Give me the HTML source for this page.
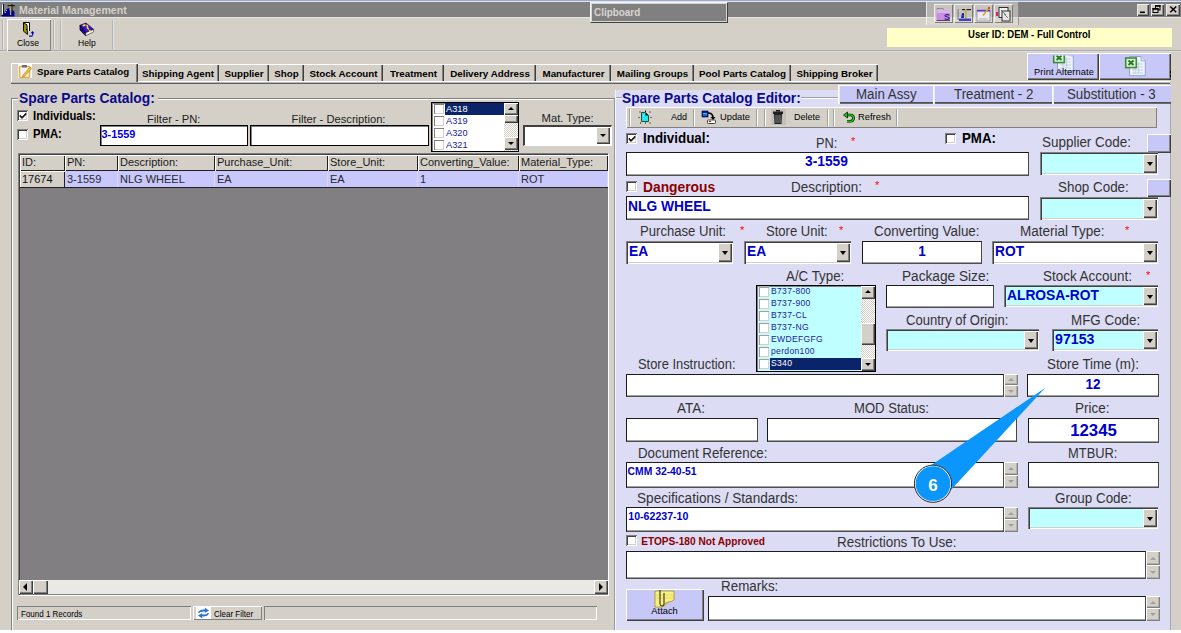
<!DOCTYPE html>
<html><head><meta charset="utf-8"><title>Material Management</title>
<style>
html,body{margin:0;padding:0;}
body{width:1181px;height:633px;position:relative;overflow:hidden;background:#d4d0c8;font-family:"Liberation Sans", sans-serif;}
body>div{position:absolute;}
.t{white-space:nowrap;}
svg{overflow:visible}
</style></head><body>
<div style="left:0px;top:0px;width:1181px;height:1px;background:#9fabc3"></div>
<div style="left:0px;top:1px;width:1181px;height:1px;background:#dae4f2"></div>
<div style="left:0px;top:2px;width:1181px;height:15px;background:#808080"></div>
<div style="left:0px;top:17px;width:1181px;height:1px;background:#e8e6e2"></div>
<svg style="position:absolute;left:0;top:0" width="18" height="18" viewBox="0 0 18 18">
<rect x="2" y="4.5" width="1" height="10" fill="#f0f0f0"/>
<rect x="3" y="4" width="1" height="11" fill="#101010"/>
<path d="M2 16.5 L3.5 14 L5 12 L6 10 L7.5 8.5 L9 8 L9.5 10 L10 11 L12 11 L13 10 L14.5 12 L14.5 16.5Z" fill="#0000a8"/>
<path d="M6 11 L7 10 M5 13 L6 12" stroke="#e0e0ff" stroke-width="0.8"/>
<rect x="1.5" y="15" width="6.5" height="1" fill="#000"/>
<rect x="10" y="6" width="1.5" height="9" fill="#b8b040"/>
<rect x="11.5" y="4" width="1" height="11" fill="#101010"/>
<rect x="7.5" y="5" width="7.5" height="1.2" fill="#181818"/>
</svg>
<div class="t" style="left:19px;top:3.91px;font-size:10.6px;font-weight:bold;color:#d4d0c8;line-height:12.18px;">Material Management</div>
<div style="left:590px;top:2px;width:138px;height:21px;background:#808080;box-sizing:border-box;border:1px solid;border-color:#f4f4f4 #404040 #404040 #f4f4f4;box-shadow:inset 1px 1px 0 #d8d6d2, inset -1px -1px 0 #d8d6d2;"></div>
<div class="t" style="left:594px;top:5.93px;font-size:10.8px;font-weight:bold;color:#d8d4d0;line-height:12.41px;transform:scaleX(0.9167);transform-origin:0 0;">Clipboard</div>
<div style="left:926px;top:2px;width:93px;height:23px;background:rgba(222,220,214,0.55);box-shadow:inset 1px 0 0 rgba(255,255,255,0.7), inset -1px 0 0 rgba(90,90,90,0.5)"></div>
<div style="left:934px;top:4px;width:19px;height:19px;background:rgba(220,216,210,0.5);box-shadow:inset 1px 1px 0 rgba(255,255,255,0.7), inset -1px -1px 0 rgba(70,70,70,0.6)"></div>
<div style="left:954px;top:4px;width:19px;height:19px;background:rgba(220,216,210,0.5);box-shadow:inset 1px 1px 0 rgba(255,255,255,0.7), inset -1px -1px 0 rgba(70,70,70,0.6)"></div>
<div style="left:974px;top:4px;width:19px;height:19px;background:rgba(220,216,210,0.5);box-shadow:inset 1px 1px 0 rgba(255,255,255,0.7), inset -1px -1px 0 rgba(70,70,70,0.6)"></div>
<div style="left:994px;top:4px;width:19px;height:19px;background:rgba(220,216,210,0.5);box-shadow:inset 1px 1px 0 rgba(255,255,255,0.7), inset -1px -1px 0 rgba(70,70,70,0.6)"></div>
<svg style="position:absolute;left:930px;top:2px" width="90" height="23" viewBox="0 0 90 23">
<path d="M7 8.5 L7 6.5 L13 6.5 L14 8.5" fill="none" stroke="#808080" stroke-width="0.8"/>
<rect x="6.5" y="8" width="13.5" height="10.5" fill="#c88ee0"/><rect x="6.5" y="8" width="13.5" height="3" fill="#dcb4ec"/>
<rect x="6.5" y="18" width="13.5" height="1" fill="#604070"/>
<text x="14" y="17.5" font-family="Liberation Sans" font-weight="bold" font-size="9" fill="#20208a">S</text>
<rect x="27.5" y="7" width="1.2" height="11" fill="#808080"/>
<rect x="32" y="7" width="9" height="1.2" fill="#202020"/>
<rect x="35" y="7" width="1.6" height="11" fill="#b8b040"/>
<path d="M31 16 L32 11 L34 11 L34 16Z" fill="#2a2ab0"/>
<rect x="29" y="16.5" width="12" height="2.5" fill="#4040c8"/>
<rect x="47" y="8" width="13" height="11" fill="#ecebf4" stroke="#909090" stroke-width="0.8"/>
<rect x="47" y="8" width="13" height="1.6" fill="#6a30d0"/>
<path d="M49 17 H58" stroke="#a0a0a0" stroke-width="0.8"/>
<path d="M53 13.5 L58.5 6.5" stroke="#c8b020" stroke-width="1.6"/><rect x="58" y="5" width="2" height="2" fill="#e04040"/>
<rect x="69" y="5.5" width="9" height="10" fill="#f4f4f4" stroke="#202020" stroke-width="0.9"/>
<rect x="72" y="9" width="8" height="10" fill="#e8e8e8" stroke="#202020" stroke-width="0.9"/>
<path d="M71 8 L76 13 M74 12 L78 16" stroke="#606060" stroke-width="0.8"/>
<rect x="66" y="10" width="2" height="4" fill="#e0207a"/>
</svg>
<div style="left:1137px;top:4px;width:12px;height:12px;background:#d4d0c8;box-shadow:inset 1px 1px 0 #ecebe8, inset -1px -1px 0 #404040, inset -2px -2px 0 #909090"></div>
<div style="left:1151px;top:4px;width:13px;height:12px;background:#d4d0c8;box-shadow:inset 1px 1px 0 #ecebe8, inset -1px -1px 0 #404040, inset -2px -2px 0 #909090"></div>
<div style="left:1166px;top:4px;width:14px;height:12px;background:#d4d0c8;box-shadow:inset 1px 1px 0 #ecebe8, inset -1px -1px 0 #404040, inset -2px -2px 0 #909090"></div>
<svg style="position:absolute;left:1137px;top:4px" width="44" height="12">
<rect x="3" y="7.5" width="5" height="1.6" fill="#000"/>
<rect x="18.5" y="1.5" width="4.5" height="4.5" fill="none" stroke="#000" stroke-width="1"/><rect x="18" y="1" width="5.5" height="1.8" fill="#000"/>
<rect x="16" y="4.5" width="5" height="4" fill="#d4d0c8" stroke="#000" stroke-width="1"/><rect x="15.5" y="4" width="6" height="1.8" fill="#000"/>
<path d="M33.3 2.5 L39.2 8.3 M39.2 2.5 L33.3 8.3" stroke="#000" stroke-width="1.5"/>
</svg>
<div style="left:0px;top:50px;width:1181px;height:1px;background:#ababab"></div>
<div style="left:0px;top:51px;width:1181px;height:1px;background:#dedcd8"></div>
<div style="left:2px;top:20px;width:1px;height:29px;background:#b4b4b4"></div>
<div style="left:3px;top:20px;width:1px;height:29px;background:#e6e4e0"></div>
<div style="left:53px;top:20px;width:1px;height:29px;background:#b4b4b4"></div>
<div style="left:54px;top:20px;width:1px;height:29px;background:#e6e4e0"></div>
<div style="left:60px;top:20px;width:1px;height:29px;background:#b4b4b4"></div>
<div style="left:61px;top:20px;width:1px;height:29px;background:#e6e4e0"></div>
<div style="left:112px;top:20px;width:1px;height:29px;background:#b4b4b4"></div>
<div style="left:113px;top:20px;width:1px;height:29px;background:#e6e4e0"></div>
<div style="left:7px;top:19px;width:44px;height:32px;background:#d4d0c8;box-shadow:inset 1px 1px 0 #ffffff, inset -1px -1px 0 #808080;"></div>
<svg style="position:absolute;left:20px;top:21px" width="18" height="17" viewBox="0 0 18 17">
<path d="M3.5 9.5 V1.5 H9.5 V10" fill="#fff" stroke="#000" stroke-width="1"/>
<rect x="4" y="2" width="5" height="8" fill="#fff"/>
<path d="M3.5 1.8 L7 3.8 L7.5 13.5 L3.5 10.2Z" fill="#9a9400" stroke="#000" stroke-width="0.9"/>
<rect x="6" y="8" width="1" height="1" fill="#000"/>
<path d="M10.5 12.2 L12.5 10 L14.5 12.2Z" fill="#0000b0"/>
<rect x="12" y="11.5" width="1.2" height="3" fill="#0000b0"/>
<rect x="9" y="14.5" width="3.5" height="1.2" fill="#0000b0"/>
</svg>
<div class="t" style="left:16.5px;top:37.23px;font-size:9.8px;font-weight:normal;color:#000;line-height:11.26px;transform:scaleX(0.8776);transform-origin:0 0;">Close</div>
<svg style="position:absolute;left:78px;top:21px" width="18" height="17" viewBox="0 0 18 17">
<path d="M2 4.3 L8 2 L15.6 8.4 L7.7 11.8Z" fill="#3a10d8" stroke="#100040" stroke-width="0.7"/>
<path d="M2 4.3 L7.7 11.8 L7.7 14.8 L2 9Z" fill="#2a00b0" stroke="#000" stroke-width="0.8"/>
<path d="M7.7 11.8 L15.6 8.4 L15.6 10.8 L7.7 14.8Z" fill="#fff" stroke="#202020" stroke-width="0.6"/>
<path d="M5 5 Q6 3.5 7.5 4.5" stroke="#f8f000" stroke-width="1.8" fill="none"/>
<path d="M8.5 3.8 Q10 5 9.5 7 L11 8.5" stroke="#f8e000" stroke-width="1.6" fill="none"/>
<rect x="11" y="9" width="1.6" height="1.6" fill="#f8f000"/>
</svg>
<div class="t" style="left:77.5px;top:37.23px;font-size:9.8px;font-weight:normal;color:#000;line-height:11.26px;transform:scaleX(0.8776);transform-origin:0 0;">Help</div>
<div style="left:887px;top:28px;width:285px;height:19px;background:#ffffc8"></div>
<div class="t" style="left:968px;top:28.89px;font-size:10.4px;font-weight:bold;color:#000;line-height:11.95px;transform:scaleX(0.9183);transform-origin:0 0;">User ID: DEM - Full Control</div>
<div style="left:137px;top:64px;width:82px;height:17px;background:#d4d0c8;box-shadow:inset 0 1px 0 #ffffff, inset -1px 0 0 #404040, inset -2px 0 0 #808080"></div>
<div class="t" style="left:-122.0px;width:600px;text-align:center;top:67.93px;font-size:9.8px;font-weight:bold;color:#000;line-height:11.26px;">Shipping Agent</div>
<div style="left:219px;top:64px;width:50px;height:17px;background:#d4d0c8;box-shadow:inset 0 1px 0 #ffffff, inset -1px 0 0 #404040, inset -2px 0 0 #808080"></div>
<div class="t" style="left:-56.0px;width:600px;text-align:center;top:67.93px;font-size:9.8px;font-weight:bold;color:#000;line-height:11.26px;">Supplier</div>
<div style="left:269px;top:64px;width:35px;height:17px;background:#d4d0c8;box-shadow:inset 0 1px 0 #ffffff, inset -1px 0 0 #404040, inset -2px 0 0 #808080"></div>
<div class="t" style="left:-13.5px;width:600px;text-align:center;top:67.93px;font-size:9.8px;font-weight:bold;color:#000;line-height:11.26px;">Shop</div>
<div style="left:304px;top:64px;width:79px;height:17px;background:#d4d0c8;box-shadow:inset 0 1px 0 #ffffff, inset -1px 0 0 #404040, inset -2px 0 0 #808080"></div>
<div class="t" style="left:43.5px;width:600px;text-align:center;top:67.93px;font-size:9.8px;font-weight:bold;color:#000;line-height:11.26px;">Stock Account</div>
<div style="left:383px;top:64px;width:61px;height:17px;background:#d4d0c8;box-shadow:inset 0 1px 0 #ffffff, inset -1px 0 0 #404040, inset -2px 0 0 #808080"></div>
<div class="t" style="left:113.5px;width:600px;text-align:center;top:67.93px;font-size:9.8px;font-weight:bold;color:#000;line-height:11.26px;">Treatment</div>
<div style="left:444px;top:64px;width:92px;height:17px;background:#d4d0c8;box-shadow:inset 0 1px 0 #ffffff, inset -1px 0 0 #404040, inset -2px 0 0 #808080"></div>
<div class="t" style="left:190.0px;width:600px;text-align:center;top:67.93px;font-size:9.8px;font-weight:bold;color:#000;line-height:11.26px;">Delivery Address</div>
<div style="left:536px;top:64px;width:75px;height:17px;background:#d4d0c8;box-shadow:inset 0 1px 0 #ffffff, inset -1px 0 0 #404040, inset -2px 0 0 #808080"></div>
<div class="t" style="left:273.5px;width:600px;text-align:center;top:67.93px;font-size:9.8px;font-weight:bold;color:#000;line-height:11.26px;">Manufacturer</div>
<div style="left:611px;top:64px;width:83px;height:17px;background:#d4d0c8;box-shadow:inset 0 1px 0 #ffffff, inset -1px 0 0 #404040, inset -2px 0 0 #808080"></div>
<div class="t" style="left:352.5px;width:600px;text-align:center;top:67.93px;font-size:9.8px;font-weight:bold;color:#000;line-height:11.26px;">Mailing Groups</div>
<div style="left:694px;top:64px;width:97px;height:17px;background:#d4d0c8;box-shadow:inset 0 1px 0 #ffffff, inset -1px 0 0 #404040, inset -2px 0 0 #808080"></div>
<div class="t" style="left:442.5px;width:600px;text-align:center;top:67.93px;font-size:9.8px;font-weight:bold;color:#000;line-height:11.26px;">Pool Parts Catalog</div>
<div style="left:791px;top:64px;width:87px;height:17px;background:#d4d0c8;box-shadow:inset 0 1px 0 #ffffff, inset -1px 0 0 #404040, inset -2px 0 0 #808080"></div>
<div class="t" style="left:534.5px;width:600px;text-align:center;top:67.93px;font-size:9.8px;font-weight:bold;color:#000;line-height:11.26px;">Shipping Broker</div>
<div style="left:138px;top:81px;width:1032px;height:1px;background:#fff"></div>
<div style="left:11px;top:82px;width:1159px;height:1px;background:#b8b8b8"></div>
<div style="left:11px;top:83px;width:1159px;height:1px;background:#606060"></div>
<div style="left:11px;top:63px;width:127px;height:19px;background:#d4d0c8;box-shadow:inset 1px 1px 0 #ffffff, inset -1px 0 0 #404040, inset -2px 0 0 #808080"></div>
<div style="left:18px;top:64px;width:14px;height:14px;background:#fff"></div>
<svg style="position:absolute;left:18px;top:64px" width="14" height="14" viewBox="0 0 14 14">
<rect x="1.5" y="2.5" width="10" height="11" rx="1" fill="#f4f4f8" stroke="#e8b040" stroke-width="1.6"/>
<rect x="4" y="1" width="5" height="2.5" fill="#6a7080"/>
<path d="M5 11 L12 3 L13.5 4.5 L6.5 12.5 L4.5 13Z" fill="#f0c030" stroke="#a07010" stroke-width="0.5"/>
</svg>
<div class="t" style="left:37px;top:65.72px;font-size:9.7px;font-weight:bold;color:#000;line-height:11.15px;">Spare Parts Catalog</div>
<div style="left:1027px;top:53px;width:72px;height:27px;background:#c8c8f8;box-shadow:inset 1px 1px 0 #ffffff, inset -1px -1px 0 #404040, inset -2px -2px 0 #808080"></div>
<div style="left:1099px;top:53px;width:72px;height:27px;background:#c8c8f8;box-shadow:inset 1px 1px 0 #ffffff, inset -1px -1px 0 #404040, inset -2px -2px 0 #808080"></div>
<svg style="position:absolute;left:1052px;top:49.5px" width="24" height="23" viewBox="0 0 24 23"><defs><clipPath id="c1057"><rect x="0" y="5.5" width="30" height="30"/></clipPath></defs><g clip-path="url(#c1057)">
<path d="M5.5 1.5 L17 1.5 L21.3 5.8 L21.3 20.7 L5.5 20.7Z" fill="#eef3fc" stroke="#8ea4cc" stroke-width="1"/>
<path d="M17 1.5 L17 5.8 L21.3 5.8" fill="#d8e0f0" stroke="#8ea4cc" stroke-width="0.8"/>
<path d="M8 9 H19 M8 12 H19 M8 15 H19 M8 18 H19 M11 7 V19 M14.5 7 V19" stroke="#b8c8e4" stroke-width="0.8"/>
<rect x="1.7" y="3" width="10.6" height="9.6" fill="#dcefd4" stroke="#3c8a3c" stroke-width="1.6"/>
<path d="M4.5 5.5 L9.5 10 M9.5 5.5 L4.5 10" stroke="#1e7a1e" stroke-width="1.8"/>
</g></svg>
<div class="t" style="left:1034px;top:66.88px;font-size:9.3px;font-weight:normal;color:#000;line-height:10.69px;letter-spacing:0.1px">Print Alternate</div>
<svg style="position:absolute;left:1123.5px;top:55px" width="24" height="23" viewBox="0 0 24 23"><defs></defs><g>
<path d="M5.5 1.5 L17 1.5 L21.3 5.8 L21.3 20.7 L5.5 20.7Z" fill="#eef3fc" stroke="#8ea4cc" stroke-width="1"/>
<path d="M17 1.5 L17 5.8 L21.3 5.8" fill="#d8e0f0" stroke="#8ea4cc" stroke-width="0.8"/>
<path d="M8 9 H19 M8 12 H19 M8 15 H19 M8 18 H19 M11 7 V19 M14.5 7 V19" stroke="#b8c8e4" stroke-width="0.8"/>
<rect x="1.7" y="3" width="10.6" height="9.6" fill="#dcefd4" stroke="#3c8a3c" stroke-width="1.6"/>
<path d="M4.5 5.5 L9.5 10 M9.5 5.5 L4.5 10" stroke="#1e7a1e" stroke-width="1.8"/>
</g></svg>
<div style="left:1170px;top:71px;width:1px;height:2px;background:#000"></div>
<div style="left:1170px;top:75px;width:1px;height:2px;background:#000"></div>
<div style="left:11px;top:98px;width:603px;height:1px;background:#808080"></div>
<div style="left:12px;top:99px;width:601px;height:1px;background:#fff"></div>
<div style="left:11px;top:98px;width:1px;height:532px;background:#808080"></div>
<div style="left:12px;top:99px;width:1px;height:531px;background:#fff"></div>
<div style="left:614px;top:98px;width:1px;height:532px;background:#9a989c"></div>
<div style="left:18px;top:90px;width:140px;height:16px;background:#d4d0c8"></div>
<div class="t" style="left:18.7px;top:89.83px;font-size:14.0px;font-weight:bold;color:#0a0a8a;line-height:16.09px;transform:scaleX(0.9857);transform-origin:0 0;">Spare Parts Catalog:</div>
<div style="left:17px;top:110px;width:11px;height:11px;background:#fff;box-shadow:inset 1px 1px 0 #808080, inset -1px -1px 0 #ffffff, inset 2px 2px 0 #404040, inset -2px -2px 0 #d4d0c8;"></div>
<svg style="position:absolute;left:17px;top:110px" width="11" height="11"><path d="M3 5 L5 7 L9 3 L9 4.6 L5 8.6 L3 6.6Z" fill="#000" stroke="#000" stroke-width="0.6"/></svg>
<div class="t" style="left:33px;top:109.64px;font-size:12px;font-weight:bold;color:#000;line-height:13.79px;transform:scaleX(0.9417);transform-origin:0 0;">Individuals:</div>
<div style="left:17px;top:129px;width:11px;height:11px;background:#fff;box-shadow:inset 1px 1px 0 #808080, inset -1px -1px 0 #ffffff, inset 2px 2px 0 #404040, inset -2px -2px 0 #d4d0c8;"></div>
<div class="t" style="left:33px;top:128.14px;font-size:12px;font-weight:bold;color:#000;line-height:13.79px;transform:scaleX(0.9417);transform-origin:0 0;">PMA:</div>
<div class="t" style="left:147px;top:112.96px;font-size:11.2px;font-weight:normal;color:#222;line-height:12.87px;">Filter - PN:</div>
<div class="t" style="left:291.6px;top:112.96px;font-size:11.2px;font-weight:normal;color:#222;line-height:12.87px;">Filter - Description:</div>
<div style="left:100px;top:125px;width:148px;height:21px;background:#fff;box-sizing:border-box;border:1px solid #000;box-shadow:inset 1px 1px 0 #808080"></div>
<div class="t" style="left:101.5px;top:128.34px;font-size:10.9px;font-weight:bold;color:#0000ee;line-height:12.52px;">3-1559</div>
<div style="left:250px;top:125px;width:179px;height:21px;background:#fff;box-sizing:border-box;border:1px solid #000;box-shadow:inset 1px 1px 0 #808080"></div>
<div style="left:431px;top:102px;width:88px;height:50px;background:#fff;box-sizing:border-box;border:1px solid #000;box-shadow:inset 1px 1px 0 #808080"></div>
<div style="left:434px;top:104px;width:10px;height:10px;background:#fff;box-shadow:inset 1px 1px 0 #808080, inset -1px -1px 0 #d4d0c8"></div>
<div style="left:445px;top:103px;width:59px;height:12px;background:#0a246a"></div>
<div class="t" style="left:446px;top:104.13px;font-size:9.25px;font-weight:normal;color:#fff;line-height:10.63px;">A318</div>
<div style="left:434px;top:116px;width:10px;height:10px;background:#fff;box-shadow:inset 1px 1px 0 #808080, inset -1px -1px 0 #d4d0c8"></div>
<div class="t" style="left:446px;top:116.13px;font-size:9.25px;font-weight:normal;color:#2020a0;line-height:10.63px;">A319</div>
<div style="left:434px;top:128px;width:10px;height:10px;background:#fff;box-shadow:inset 1px 1px 0 #808080, inset -1px -1px 0 #d4d0c8"></div>
<div class="t" style="left:446px;top:128.13px;font-size:9.25px;font-weight:normal;color:#2020a0;line-height:10.63px;">A320</div>
<div style="left:434px;top:140px;width:10px;height:10px;background:#fff;box-shadow:inset 1px 1px 0 #808080, inset -1px -1px 0 #d4d0c8"></div>
<div class="t" style="left:446px;top:140.13px;font-size:9.25px;font-weight:normal;color:#2020a0;line-height:10.63px;">A321</div>
<div style="left:504px;top:103px;width:14px;height:48px;background:repeating-conic-gradient(#d4d0c8 0 25%, #fff 0 50%) 0 0/2px 2px"></div>
<div style="left:504px;top:103px;width:14px;height:12px;background:#d4d0c8;box-shadow:inset 1px 1px 0 #ffffff, inset -1px -1px 0 #404040, inset -2px -2px 0 #808080;"></div>
<div style="left:508px;top:107px;width:0px;height:0px;border-left:3px solid transparent;border-right:3px solid transparent;border-bottom:3px solid #000;"></div>
<div style="left:504px;top:115px;width:14px;height:8px;background:#d4d0c8;box-shadow:inset 1px 1px 0 #ffffff, inset -1px -1px 0 #404040, inset -2px -2px 0 #808080;"></div>
<div style="left:504px;top:137px;width:14px;height:13px;background:#d4d0c8;box-shadow:inset 1px 1px 0 #ffffff, inset -1px -1px 0 #404040, inset -2px -2px 0 #808080;"></div>
<div style="left:508px;top:142px;width:0px;height:0px;border-left:3px solid transparent;border-right:3px solid transparent;border-top:3px solid #000;"></div>
<div class="t" style="left:541.6px;top:112.36px;font-size:11.2px;font-weight:normal;color:#222;line-height:12.87px;">Mat. Type:</div>
<div style="left:523px;top:125px;width:89px;height:21px;background:#fff;box-sizing:border-box;border:1px solid #808080;border-top:2px solid #404040;border-left:2px solid #404040;border-right:1px solid #fff;border-bottom:1px solid #fff"></div>
<div style="left:596px;top:127px;width:14px;height:17px;background:#d4d0c8;box-shadow:inset 1px 1px 0 #ffffff, inset -1px -1px 0 #404040, inset -2px -2px 0 #808080;"></div>
<div style="left:600px;top:134px;width:0px;height:0px;border-left:3px solid transparent;border-right:3px solid transparent;border-top:3px solid #000;"></div>
<div style="left:18px;top:153px;width:591px;height:443px;background:#827f83;box-sizing:border-box;border:1px solid;border-color:#808080 #fff #fff #808080;box-shadow:inset 1px 1px 0 #404040"></div>
<div style="left:20px;top:155px;width:45px;height:16px;background:#d4d0c8;box-shadow:inset 1px 1px 0 #fff, inset -1px -1px 0 #202020"></div>
<div class="t" style="left:22px;top:156.32px;font-size:11.8px;font-weight:normal;color:#1a1a1a;line-height:13.56px;transform:scaleX(0.9322);transform-origin:0 0;">ID:</div>
<div style="left:20px;top:171px;width:45px;height:17px;background:#d4d0c8;box-shadow:inset 1px 1px 0 #fff, inset -1px -1px 0 #202020"></div>
<div class="t" style="left:22px;top:172.62px;font-size:11.8px;font-weight:normal;color:#111;line-height:13.56px;transform:scaleX(0.9322);transform-origin:0 0;">17674</div>
<div style="left:65px;top:155px;width:53px;height:16px;background:#d4d0c8;box-shadow:inset 1px 1px 0 #fff, inset -1px -1px 0 #202020"></div>
<div class="t" style="left:67px;top:156.32px;font-size:11.8px;font-weight:normal;color:#1a1a1a;line-height:13.56px;transform:scaleX(0.9322);transform-origin:0 0;">PN:</div>
<div style="left:65px;top:171px;width:53px;height:16px;background:#c8c8fc;box-shadow:inset -1px 0 0 #d8d8f0"></div>
<div class="t" style="left:67px;top:172.62px;font-size:11.8px;font-weight:normal;color:#2a2a2a;line-height:13.56px;transform:scaleX(0.9322);transform-origin:0 0;">3-1559</div>
<div style="left:118px;top:155px;width:97px;height:16px;background:#d4d0c8;box-shadow:inset 1px 1px 0 #fff, inset -1px -1px 0 #202020"></div>
<div class="t" style="left:120px;top:156.32px;font-size:11.8px;font-weight:normal;color:#1a1a1a;line-height:13.56px;transform:scaleX(0.9322);transform-origin:0 0;">Description:</div>
<div style="left:118px;top:171px;width:97px;height:16px;background:#c8c8fc;box-shadow:inset -1px 0 0 #d8d8f0"></div>
<div class="t" style="left:120px;top:172.62px;font-size:11.8px;font-weight:normal;color:#2a2a2a;line-height:13.56px;transform:scaleX(0.9322);transform-origin:0 0;">NLG WHEEL</div>
<div style="left:215px;top:155px;width:113px;height:16px;background:#d4d0c8;box-shadow:inset 1px 1px 0 #fff, inset -1px -1px 0 #202020"></div>
<div class="t" style="left:217px;top:156.32px;font-size:11.8px;font-weight:normal;color:#1a1a1a;line-height:13.56px;transform:scaleX(0.9322);transform-origin:0 0;">Purchase_Unit:</div>
<div style="left:215px;top:171px;width:113px;height:16px;background:#c8c8fc;box-shadow:inset -1px 0 0 #d8d8f0"></div>
<div class="t" style="left:217px;top:172.62px;font-size:11.8px;font-weight:normal;color:#2a2a2a;line-height:13.56px;transform:scaleX(0.9322);transform-origin:0 0;">EA</div>
<div style="left:328px;top:155px;width:90px;height:16px;background:#d4d0c8;box-shadow:inset 1px 1px 0 #fff, inset -1px -1px 0 #202020"></div>
<div class="t" style="left:330px;top:156.32px;font-size:11.8px;font-weight:normal;color:#1a1a1a;line-height:13.56px;transform:scaleX(0.9322);transform-origin:0 0;">Store_Unit:</div>
<div style="left:328px;top:171px;width:90px;height:16px;background:#c8c8fc;box-shadow:inset -1px 0 0 #d8d8f0"></div>
<div class="t" style="left:330px;top:172.62px;font-size:11.8px;font-weight:normal;color:#2a2a2a;line-height:13.56px;transform:scaleX(0.9322);transform-origin:0 0;">EA</div>
<div style="left:418px;top:155px;width:101px;height:16px;background:#d4d0c8;box-shadow:inset 1px 1px 0 #fff, inset -1px -1px 0 #202020"></div>
<div class="t" style="left:420px;top:156.32px;font-size:11.8px;font-weight:normal;color:#1a1a1a;line-height:13.56px;transform:scaleX(0.9322);transform-origin:0 0;">Converting_Value:</div>
<div style="left:418px;top:171px;width:101px;height:16px;background:#c8c8fc;box-shadow:inset -1px 0 0 #d8d8f0"></div>
<div class="t" style="left:420px;top:172.62px;font-size:11.8px;font-weight:normal;color:#2a2a2a;line-height:13.56px;transform:scaleX(0.9322);transform-origin:0 0;">1</div>
<div style="left:519px;top:155px;width:89px;height:16px;background:#d4d0c8;box-shadow:inset 1px 1px 0 #fff, inset -1px -1px 0 #202020"></div>
<div class="t" style="left:521px;top:156.32px;font-size:11.8px;font-weight:normal;color:#1a1a1a;line-height:13.56px;transform:scaleX(0.9322);transform-origin:0 0;">Material_Type:</div>
<div style="left:519px;top:171px;width:89px;height:16px;background:#c8c8fc;box-shadow:inset -1px 0 0 #d8d8f0"></div>
<div class="t" style="left:521px;top:172.62px;font-size:11.8px;font-weight:normal;color:#2a2a2a;line-height:13.56px;transform:scaleX(0.9322);transform-origin:0 0;">ROT</div>
<div style="left:20px;top:187px;width:588px;height:1px;background:#202020"></div>
<div style="left:19px;top:580px;width:589px;height:14px;background:#ebe9e5"></div>
<div style="left:19px;top:580px;width:14px;height:14px;background:#d4d0c8;box-shadow:inset 1px 1px 0 #ffffff, inset -1px -1px 0 #404040, inset -2px -2px 0 #808080;"></div>
<div style="left:23px;top:583px;width:0px;height:0px;border-top:4px solid transparent;border-bottom:4px solid transparent;border-right:4px solid #000;"></div>
<div style="left:33px;top:580px;width:15px;height:14px;background:#d4d0c8;box-shadow:inset 1px 1px 0 #ffffff, inset -1px -1px 0 #404040, inset -2px -2px 0 #808080;"></div>
<div style="left:594px;top:580px;width:14px;height:14px;background:#d4d0c8;box-shadow:inset 1px 1px 0 #ffffff, inset -1px -1px 0 #404040, inset -2px -2px 0 #808080;"></div>
<div style="left:599px;top:583px;width:0px;height:0px;border-top:4px solid transparent;border-bottom:4px solid transparent;border-left:4px solid #000;"></div>
<div style="left:17px;top:606px;width:174px;height:14px;background:#d4d0c8;box-shadow:inset 1px 1px 0 #808080, inset -1px -1px 0 #ffffff;"></div>
<div class="t" style="left:21px;top:607.53px;font-size:9.8px;font-weight:normal;color:#000;line-height:11.26px;transform:scaleX(0.8163);transform-origin:0 0;">Found 1 Records</div>
<div style="left:193px;top:606px;width:69px;height:14px;background:#d4d0c8;box-shadow:inset 1px 1px 0 #ffffff, inset -1px -1px 0 #808080;"></div>
<div style="left:196px;top:607px;width:15px;height:12px;background:#fff"></div>
<svg style="position:absolute;left:196px;top:607px" width="15" height="12" viewBox="0 0 15 12">
<path d="M2 6 Q3 2 9 2.5 L8.5 0.5 L13 3.5 L8.5 6 L9 4.5 Q5 4 3 6Z" fill="#2a70d0"/>
<path d="M13 6 Q12 10 6 9.5 L6.5 11.5 L2 8.5 L6.5 6 L6 7.5 Q10 8 12 6Z" fill="#2a70d0"/>
</svg>
<div class="t" style="left:214px;top:607.53px;font-size:9.8px;font-weight:normal;color:#000;line-height:11.26px;transform:scaleX(0.8163);transform-origin:0 0;">Clear Filter</div>
<div style="left:264px;top:606px;width:333px;height:14px;background:#d4d0c8;box-shadow:inset 1px 1px 0 #808080, inset -1px -1px 0 #ffffff;"></div>
<div style="left:0px;top:630px;width:1181px;height:3px;background:#fff"></div>
<div style="left:615px;top:90px;width:555px;height:540px;background:#dcdcf4"></div>
<div style="left:615px;top:90px;width:1px;height:540px;background:#f4f4ff"></div>
<div style="left:1170px;top:84px;width:1px;height:546px;background:#a8a8b0"></div>
<div style="left:616px;top:97px;width:6px;height:1px;background:#a0a0b0"></div>
<div style="left:616px;top:98px;width:6px;height:1px;background:#fff"></div>
<div style="left:801px;top:97px;width:38px;height:1px;background:#a0a0b0"></div>
<div style="left:801px;top:98px;width:38px;height:1px;background:#fff"></div>
<div class="t" style="left:622px;top:90.03px;font-size:14.0px;font-weight:bold;color:#0a0a8a;line-height:16.09px;transform:scaleX(0.9821);transform-origin:0 0;">Spare Parts Catalog Editor:</div>
<div style="left:838px;top:85px;width:95px;height:19px;background:#c8c8f8;box-shadow:inset 1px 1px 0 #ffffff, inset 2px 0 0 #ececf8, inset 0 -1px 0 #6a6a70, inset 0 -2px 0 #505050"></div>
<div class="t" style="left:855.5px;top:86.33px;font-size:14.0px;font-weight:normal;color:#333;line-height:16.09px;transform:scaleX(0.9500);transform-origin:0 0;">Main Assy</div>
<div style="left:933px;top:85px;width:119px;height:19px;background:#c8c8f8;box-shadow:inset 1px 1px 0 #ffffff, inset 2px 0 0 #ececf8, inset 0 -1px 0 #6a6a70, inset 0 -2px 0 #505050"></div>
<div class="t" style="left:954px;top:86.33px;font-size:14.0px;font-weight:normal;color:#333;line-height:16.09px;transform:scaleX(0.9500);transform-origin:0 0;">Treatment - 2</div>
<div style="left:1052px;top:85px;width:119px;height:19px;background:#c8c8f8;box-shadow:inset 1px 1px 0 #ffffff, inset 2px 0 0 #ececf8, inset 0 -1px 0 #6a6a70, inset 0 -2px 0 #505050"></div>
<div class="t" style="left:1066.6px;top:86.33px;font-size:14.0px;font-weight:normal;color:#333;line-height:16.09px;transform:scaleX(0.9500);transform-origin:0 0;">Substitution - 3</div>
<div style="left:626px;top:107px;width:531px;height:21px;background:#d4d0c8;box-shadow:inset 1px 1px 0 #ffffff, inset -1px -1px 0 #808080"></div>
<div style="left:629px;top:109px;width:1px;height:17px;background:#a0a0a0"></div>
<div style="left:630px;top:109px;width:1px;height:17px;background:#fff"></div>
<div style="left:693px;top:109px;width:1px;height:17px;background:#a0a0a0"></div>
<div style="left:694px;top:109px;width:1px;height:17px;background:#fff"></div>
<div style="left:756px;top:109px;width:1px;height:17px;background:#a0a0a0"></div>
<div style="left:757px;top:109px;width:1px;height:17px;background:#fff"></div>
<div style="left:764px;top:109px;width:1px;height:17px;background:#a0a0a0"></div>
<div style="left:765px;top:109px;width:1px;height:17px;background:#fff"></div>
<div style="left:827px;top:109px;width:1px;height:17px;background:#a0a0a0"></div>
<div style="left:828px;top:109px;width:1px;height:17px;background:#fff"></div>
<div style="left:833px;top:109px;width:1px;height:17px;background:#a0a0a0"></div>
<div style="left:834px;top:109px;width:1px;height:17px;background:#fff"></div>
<div style="left:896px;top:109px;width:1px;height:17px;background:#a0a0a0"></div>
<div style="left:897px;top:109px;width:1px;height:17px;background:#fff"></div>
<svg style="position:absolute;left:638px;top:110px" width="15" height="15" viewBox="0 0 15 15">
<path d="M3.5 2.5 L7.5 2.5 L10.5 5.5 L10.5 11.5 L3.5 11.5Z" fill="#10f0f0" stroke="#303030" stroke-width="0.9"/>
<path d="M7.5 2.5 L10.5 5.5 L7.5 5.5Z" fill="#000"/>
<path d="M5 5 L6 6 M5 8 L6 9 M7 7 L8 8" stroke="#c0ffff" stroke-width="0.8"/>
<g fill="#000"><rect x="1.5" y="1.5" width="1" height="1"/><rect x="7" y="0.5" width="1" height="1.5"/><rect x="11.5" y="1.5" width="1" height="1"/>
<rect x="0.5" y="7" width="1" height="1"/><rect x="12.5" y="7" width="1" height="1"/>
<rect x="2" y="12.5" width="1" height="1"/><rect x="7" y="12.5" width="1" height="1"/><rect x="11.5" y="12.5" width="1" height="1"/></g>
</svg>
<div class="t" style="left:671px;top:111.33px;font-size:9.8px;font-weight:normal;color:#000;line-height:11.26px;transform:scaleX(0.9184);transform-origin:0 0;">Add</div>
<svg style="position:absolute;left:701px;top:110px" width="16" height="15" viewBox="0 0 16 15">
<rect x="1" y="1" width="6" height="6" fill="#0020a0" stroke="#000040" stroke-width="0.6"/>
<path d="M2 3.5 H6 M2 5 H6" stroke="#40f0f0" stroke-width="0.8"/>
<path d="M7 3 Q12 3 12 8" stroke="#000" stroke-width="1.6" fill="none"/>
<path d="M9.5 7 L12 10 L14.5 7Z" fill="#000"/>
<rect x="6.5" y="10" width="8" height="3.5" rx="0.8" fill="#fff" stroke="#303030" stroke-width="0.9"/>
<rect x="8" y="11" width="2" height="1" fill="#e00000"/>
</svg>
<div class="t" style="left:720px;top:111.33px;font-size:9.8px;font-weight:normal;color:#000;line-height:11.26px;transform:scaleX(0.9490);transform-origin:0 0;">Update</div>
<svg style="position:absolute;left:771px;top:109px" width="15" height="16" viewBox="0 0 15 16">
<rect x="0" y="0" width="15" height="16" fill="#c4c0b8"/>
<rect x="5" y="1" width="4" height="1.5" fill="#101010"/>
<rect x="2" y="2.5" width="10" height="2.5" fill="#202020"/>
<path d="M3 5 L11 5 L10.5 15 L3.5 15Z" fill="#202020"/>
<path d="M5 6 V14 M7 6 V14 M9 6 V14" stroke="#909090" stroke-width="0.9"/>
</svg>
<div class="t" style="left:794px;top:111.33px;font-size:9.8px;font-weight:normal;color:#000;line-height:11.26px;transform:scaleX(0.9184);transform-origin:0 0;">Delete</div>
<svg style="position:absolute;left:843px;top:112px" width="12" height="11" viewBox="0 0 12 11">
<path d="M3.5 3 H7.5 Q10.5 3 10.5 6 Q10.5 9.3 7 9.3 H4" stroke="#000" stroke-width="2.6" fill="none"/>
<path d="M3.5 3 H7.5 Q10.5 3 10.5 6 Q10.5 9.3 7 9.3 H4" stroke="#10d010" stroke-width="1.5" fill="none"/>
<path d="M0.5 3 L4.5 0 L4.5 6Z" fill="#10d010" stroke="#000" stroke-width="0.7"/>
</svg>
<div class="t" style="left:858px;top:111.33px;font-size:9.8px;font-weight:normal;color:#000;line-height:11.26px;transform:scaleX(0.9592);transform-origin:0 0;">Refresh</div>
<div style="left:626px;top:133px;width:11px;height:11px;background:#fff;box-shadow:inset 1px 1px 0 #808080, inset -1px -1px 0 #ffffff, inset 2px 2px 0 #404040, inset -2px -2px 0 #d4d0c8;"></div>
<svg style="position:absolute;left:626px;top:133px" width="11" height="11"><path d="M3 5 L5 7 L9 3 L9 4.6 L5 8.6 L3 6.6Z" fill="#000" stroke="#000" stroke-width="0.6"/></svg>
<div class="t" style="left:643px;top:130.43px;font-size:14.0px;font-weight:bold;color:#000;line-height:16.09px;transform:scaleX(0.9571);transform-origin:0 0;">Individual:</div>
<div class="t" style="left:816.2px;top:134.53px;font-size:14.0px;font-weight:normal;color:#333;line-height:16.09px;transform:scaleX(0.9143);transform-origin:0 0;">PN:</div>
<div class="t" style="left:851px;top:134.54px;font-size:11px;font-weight:normal;color:#ff0000;line-height:12.64px;">*</div>
<div style="left:945px;top:133px;width:11px;height:11px;background:#fff;box-shadow:inset 1px 1px 0 #808080, inset -1px -1px 0 #ffffff, inset 2px 2px 0 #404040, inset -2px -2px 0 #d4d0c8;"></div>
<div class="t" style="left:962px;top:130.43px;font-size:14.0px;font-weight:bold;color:#000;line-height:16.09px;transform:scaleX(0.9500);transform-origin:0 0;">PMA:</div>
<div class="t" style="left:1042px;top:134.43px;font-size:14.0px;font-weight:normal;color:#333;line-height:16.09px;transform:scaleX(0.9607);transform-origin:0 0;">Supplier Code:</div>
<div style="left:1147px;top:134px;width:24px;height:19px;background:#c8c8f8;box-shadow:inset 1px 1px 0 #ffffff, inset -1px -1px 0 #404040, inset -2px -2px 0 #808080"></div>
<div style="left:626px;top:152px;width:403px;height:24px;background:#fff;box-sizing:border-box;border:1px solid #1a1a1a;border-right-color:#484848;border-bottom-color:#505050;box-shadow:inset 0 -1px 0 #a0a0a0;"></div>
<div class="t" style="left:805px;top:153.13px;font-size:14.0px;font-weight:bold;color:#0000cc;line-height:16.09px;transform:scaleX(0.9857);transform-origin:0 0;">3-1559</div>
<div style="left:1040px;top:152px;width:118px;height:23px;background:#c0ffff;box-shadow:inset 1px 1px 0 #808080, inset 2px 2px 0 #404040, inset -1px -1px 0 #fff, inset -2px -2px 0 #d4d0c8"></div>
<div style="left:1143px;top:154px;width:14px;height:19px;background:#d4d0c8;box-shadow:inset 1px 1px 0 #fff, inset -1px -1px 0 #404040, inset -2px -2px 0 #808080"></div>
<div style="left:1146.5px;top:162.0px;width:0px;height:0px;border-left:3.5px solid transparent;border-right:3.5px solid transparent;border-top:4px solid #000;"></div>
<div style="left:626px;top:181px;width:11px;height:11px;background:#fff;box-shadow:inset 1px 1px 0 #808080, inset -1px -1px 0 #ffffff, inset 2px 2px 0 #404040, inset -2px -2px 0 #d4d0c8;"></div>
<div class="t" style="left:643px;top:178.53px;font-size:14.0px;font-weight:bold;color:#8b0000;line-height:16.09px;transform:scaleX(0.9857);transform-origin:0 0;">Dangerous</div>
<div class="t" style="left:791px;top:178.53px;font-size:14.0px;font-weight:normal;color:#333;line-height:16.09px;transform:scaleX(0.9607);transform-origin:0 0;">Description:</div>
<div class="t" style="left:875px;top:178.54px;font-size:11px;font-weight:normal;color:#ff0000;line-height:12.64px;">*</div>
<div class="t" style="left:1057.7px;top:178.53px;font-size:14.0px;font-weight:normal;color:#333;line-height:16.09px;transform:scaleX(0.9571);transform-origin:0 0;">Shop Code:</div>
<div style="left:1147px;top:179px;width:24px;height:18px;background:#c8c8f8;box-shadow:inset 1px 1px 0 #ffffff, inset -1px -1px 0 #404040, inset -2px -2px 0 #808080"></div>
<div style="left:626px;top:196px;width:403px;height:24px;background:#fff;box-sizing:border-box;border:1px solid #1a1a1a;border-right-color:#484848;border-bottom-color:#505050;box-shadow:inset 0 -1px 0 #a0a0a0;"></div>
<div class="t" style="left:628px;top:197.83px;font-size:14.0px;font-weight:bold;color:#0000cc;line-height:16.09px;transform:scaleX(0.9857);transform-origin:0 0;">NLG WHEEL</div>
<div style="left:1040px;top:197px;width:118px;height:23px;background:#c0ffff;box-shadow:inset 1px 1px 0 #808080, inset 2px 2px 0 #404040, inset -1px -1px 0 #fff, inset -2px -2px 0 #d4d0c8"></div>
<div style="left:1143px;top:199px;width:14px;height:19px;background:#d4d0c8;box-shadow:inset 1px 1px 0 #fff, inset -1px -1px 0 #404040, inset -2px -2px 0 #808080"></div>
<div style="left:1146.5px;top:207.0px;width:0px;height:0px;border-left:3.5px solid transparent;border-right:3.5px solid transparent;border-top:4px solid #000;"></div>
<div class="t" style="left:640px;top:223.43px;font-size:14.0px;font-weight:normal;color:#333;line-height:16.09px;transform:scaleX(0.9357);transform-origin:0 0;">Purchase Unit:</div>
<div class="t" style="left:740px;top:223.54px;font-size:11px;font-weight:normal;color:#ff0000;line-height:12.64px;">*</div>
<div class="t" style="left:765.7px;top:223.43px;font-size:14.0px;font-weight:normal;color:#333;line-height:16.09px;transform:scaleX(0.9321);transform-origin:0 0;">Store Unit:</div>
<div class="t" style="left:839px;top:223.54px;font-size:11px;font-weight:normal;color:#ff0000;line-height:12.64px;">*</div>
<div class="t" style="left:874.2px;top:223.43px;font-size:14.0px;font-weight:normal;color:#333;line-height:16.09px;transform:scaleX(0.9571);transform-origin:0 0;">Converting Value:</div>
<div class="t" style="left:1020px;top:223.43px;font-size:14.0px;font-weight:normal;color:#333;line-height:16.09px;transform:scaleX(0.9643);transform-origin:0 0;">Material Type:</div>
<div class="t" style="left:1125px;top:223.54px;font-size:11px;font-weight:normal;color:#ff0000;line-height:12.64px;">*</div>
<div style="left:626px;top:241px;width:107px;height:23px;background:#fff;box-shadow:inset 1px 1px 0 #808080, inset 2px 2px 0 #404040, inset -1px -1px 0 #fff, inset -2px -2px 0 #d4d0c8"></div>
<div style="left:718px;top:243px;width:14px;height:19px;background:#d4d0c8;box-shadow:inset 1px 1px 0 #fff, inset -1px -1px 0 #404040, inset -2px -2px 0 #808080"></div>
<div style="left:721.5px;top:251.0px;width:0px;height:0px;border-left:3.5px solid transparent;border-right:3.5px solid transparent;border-top:4px solid #000;"></div>
<div class="t" style="left:629px;top:242.83px;font-size:14.0px;font-weight:bold;color:#0000cc;line-height:16.09px;transform:scaleX(0.9857);transform-origin:0 0;">EA</div>
<div style="left:744px;top:241px;width:107px;height:23px;background:#fff;box-shadow:inset 1px 1px 0 #808080, inset 2px 2px 0 #404040, inset -1px -1px 0 #fff, inset -2px -2px 0 #d4d0c8"></div>
<div style="left:836px;top:243px;width:14px;height:19px;background:#d4d0c8;box-shadow:inset 1px 1px 0 #fff, inset -1px -1px 0 #404040, inset -2px -2px 0 #808080"></div>
<div style="left:839.5px;top:251.0px;width:0px;height:0px;border-left:3.5px solid transparent;border-right:3.5px solid transparent;border-top:4px solid #000;"></div>
<div class="t" style="left:747px;top:242.83px;font-size:14.0px;font-weight:bold;color:#0000cc;line-height:16.09px;transform:scaleX(0.9857);transform-origin:0 0;">EA</div>
<div style="left:862px;top:241px;width:120px;height:23px;background:#fff;box-sizing:border-box;border:1px solid #1a1a1a;border-right-color:#484848;border-bottom-color:#505050;box-shadow:inset 0 -1px 0 #a0a0a0;"></div>
<div class="t" style="left:622px;width:600px;text-align:center;top:242.83px;font-size:14.0px;font-weight:bold;color:#0000cc;line-height:16.09px;transform:scaleX(0.9643);transform-origin:50% 0;">1</div>
<div style="left:992px;top:241px;width:166px;height:23px;background:#fff;box-shadow:inset 1px 1px 0 #808080, inset 2px 2px 0 #404040, inset -1px -1px 0 #fff, inset -2px -2px 0 #d4d0c8"></div>
<div style="left:1143px;top:243px;width:14px;height:19px;background:#d4d0c8;box-shadow:inset 1px 1px 0 #fff, inset -1px -1px 0 #404040, inset -2px -2px 0 #808080"></div>
<div style="left:1146.5px;top:251.0px;width:0px;height:0px;border-left:3.5px solid transparent;border-right:3.5px solid transparent;border-top:4px solid #000;"></div>
<div class="t" style="left:995px;top:242.83px;font-size:14.0px;font-weight:bold;color:#0000cc;line-height:16.09px;transform:scaleX(0.9857);transform-origin:0 0;">ROT</div>
<div class="t" style="left:786px;top:268.13px;font-size:14.0px;font-weight:normal;color:#333;line-height:16.09px;transform:scaleX(0.9521);transform-origin:0 0;">A/C Type:</div>
<div class="t" style="left:901.7px;top:268.13px;font-size:14.0px;font-weight:normal;color:#333;line-height:16.09px;transform:scaleX(0.9757);transform-origin:0 0;">Package Size:</div>
<div class="t" style="left:1042.6px;top:268.23px;font-size:14.0px;font-weight:normal;color:#333;line-height:16.09px;transform:scaleX(0.9600);transform-origin:0 0;">Stock Account:</div>
<div class="t" style="left:1146px;top:268.55px;font-size:11px;font-weight:normal;color:#ff0000;line-height:12.64px;">*</div>
<div style="left:756px;top:285px;width:120px;height:87px;background:#c0ffff;box-sizing:border-box;border:1px solid #000;box-shadow:inset 1px 1px 0 #808080"></div>
<div style="left:759px;top:287px;width:10px;height:10px;background:#fff;box-shadow:inset 1px 1px 0 #a0a0a0, inset -1px -1px 0 #d0d0d0, 0 0 0 0.5px #e0f0f0"></div>
<div class="t" style="left:771px;top:286.72px;font-size:8.6px;font-weight:normal;color:#2020a0;line-height:9.88px;letter-spacing:0.3px">B737-800</div>
<div style="left:759px;top:299px;width:10px;height:10px;background:#fff;box-shadow:inset 1px 1px 0 #a0a0a0, inset -1px -1px 0 #d0d0d0, 0 0 0 0.5px #e0f0f0"></div>
<div class="t" style="left:771px;top:298.72px;font-size:8.6px;font-weight:normal;color:#2020a0;line-height:9.88px;letter-spacing:0.3px">B737-900</div>
<div style="left:759px;top:311px;width:10px;height:10px;background:#fff;box-shadow:inset 1px 1px 0 #a0a0a0, inset -1px -1px 0 #d0d0d0, 0 0 0 0.5px #e0f0f0"></div>
<div class="t" style="left:771px;top:310.72px;font-size:8.6px;font-weight:normal;color:#2020a0;line-height:9.88px;letter-spacing:0.3px">B737-CL</div>
<div style="left:759px;top:323px;width:10px;height:10px;background:#fff;box-shadow:inset 1px 1px 0 #a0a0a0, inset -1px -1px 0 #d0d0d0, 0 0 0 0.5px #e0f0f0"></div>
<div class="t" style="left:771px;top:322.72px;font-size:8.6px;font-weight:normal;color:#2020a0;line-height:9.88px;letter-spacing:0.3px">B737-NG</div>
<div style="left:759px;top:335px;width:10px;height:10px;background:#fff;box-shadow:inset 1px 1px 0 #a0a0a0, inset -1px -1px 0 #d0d0d0, 0 0 0 0.5px #e0f0f0"></div>
<div class="t" style="left:771px;top:334.72px;font-size:8.6px;font-weight:normal;color:#2020a0;line-height:9.88px;letter-spacing:0.3px">EWDEFGFG</div>
<div style="left:759px;top:347px;width:10px;height:10px;background:#fff;box-shadow:inset 1px 1px 0 #a0a0a0, inset -1px -1px 0 #d0d0d0, 0 0 0 0.5px #e0f0f0"></div>
<div class="t" style="left:771px;top:346.72px;font-size:8.6px;font-weight:normal;color:#2020a0;line-height:9.88px;letter-spacing:0.3px">perdon100</div>
<div style="left:759px;top:359px;width:10px;height:10px;background:#fff;box-shadow:inset 1px 1px 0 #a0a0a0, inset -1px -1px 0 #d0d0d0, 0 0 0 0.5px #e0f0f0"></div>
<div style="left:770px;top:358px;width:91px;height:12px;background:#0a246a"></div>
<div class="t" style="left:771px;top:358.72px;font-size:8.6px;font-weight:normal;color:#fff;line-height:9.88px;letter-spacing:0.3px">S340</div>
<div style="left:861px;top:286px;width:14px;height:84px;background:repeating-conic-gradient(#d4d0c8 0 25%, #fff 0 50%) 0 0/2px 2px"></div>
<div style="left:861px;top:286px;width:14px;height:13px;background:#d4d0c8;box-shadow:inset 1px 1px 0 #ffffff, inset -1px -1px 0 #404040, inset -2px -2px 0 #808080;"></div>
<div style="left:865px;top:290px;width:0px;height:0px;border-left:3px solid transparent;border-right:3px solid transparent;border-bottom:3px solid #000;"></div>
<div style="left:861px;top:323px;width:14px;height:22px;background:#d4d0c8;box-shadow:inset 1px 1px 0 #ffffff, inset -1px -1px 0 #404040, inset -2px -2px 0 #808080;"></div>
<div style="left:861px;top:358px;width:14px;height:13px;background:#d4d0c8;box-shadow:inset 1px 1px 0 #ffffff, inset -1px -1px 0 #404040, inset -2px -2px 0 #808080;"></div>
<div style="left:865px;top:363px;width:0px;height:0px;border-left:3px solid transparent;border-right:3px solid transparent;border-top:3px solid #000;"></div>
<div style="left:886px;top:285px;width:108px;height:23px;background:#fff;box-sizing:border-box;border:1px solid #1a1a1a;border-right-color:#484848;border-bottom-color:#505050;box-shadow:inset 0 -1px 0 #a0a0a0;"></div>
<div style="left:1004px;top:285px;width:154px;height:22px;background:#c0ffff;box-shadow:inset 1px 1px 0 #808080, inset 2px 2px 0 #404040, inset -1px -1px 0 #fff, inset -2px -2px 0 #d4d0c8"></div>
<div style="left:1143px;top:287px;width:14px;height:18px;background:#d4d0c8;box-shadow:inset 1px 1px 0 #fff, inset -1px -1px 0 #404040, inset -2px -2px 0 #808080"></div>
<div style="left:1146.5px;top:294.5px;width:0px;height:0px;border-left:3.5px solid transparent;border-right:3.5px solid transparent;border-top:4px solid #000;"></div>
<div class="t" style="left:1007px;top:286.83px;font-size:14.0px;font-weight:bold;color:#0000cc;line-height:16.09px;transform:scaleX(0.9857);transform-origin:0 0;">ALROSA-ROT</div>
<div class="t" style="left:905.7px;top:312.23px;font-size:14.0px;font-weight:normal;color:#333;line-height:16.09px;transform:scaleX(0.9321);transform-origin:0 0;">Country of Origin:</div>
<div class="t" style="left:1070.5px;top:312.23px;font-size:14.0px;font-weight:normal;color:#333;line-height:16.09px;transform:scaleX(0.9571);transform-origin:0 0;">MFG Code:</div>
<div style="left:886px;top:329px;width:153px;height:22px;background:#c0ffff;box-shadow:inset 1px 1px 0 #808080, inset 2px 2px 0 #404040, inset -1px -1px 0 #fff, inset -2px -2px 0 #d4d0c8"></div>
<div style="left:1024px;top:331px;width:14px;height:18px;background:#d4d0c8;box-shadow:inset 1px 1px 0 #fff, inset -1px -1px 0 #404040, inset -2px -2px 0 #808080"></div>
<div style="left:1027.5px;top:338.5px;width:0px;height:0px;border-left:3.5px solid transparent;border-right:3.5px solid transparent;border-top:4px solid #000;"></div>
<div style="left:1052px;top:329px;width:106px;height:22px;background:#c0ffff;box-shadow:inset 1px 1px 0 #808080, inset 2px 2px 0 #404040, inset -1px -1px 0 #fff, inset -2px -2px 0 #d4d0c8"></div>
<div style="left:1143px;top:331px;width:14px;height:18px;background:#d4d0c8;box-shadow:inset 1px 1px 0 #fff, inset -1px -1px 0 #404040, inset -2px -2px 0 #808080"></div>
<div style="left:1146.5px;top:338.5px;width:0px;height:0px;border-left:3.5px solid transparent;border-right:3.5px solid transparent;border-top:4px solid #000;"></div>
<div class="t" style="left:1055px;top:330.83px;font-size:14.0px;font-weight:bold;color:#0000cc;line-height:16.09px;transform:scaleX(1.0121);transform-origin:0 0;">97153</div>
<div class="t" style="left:637.8px;top:356.33px;font-size:14.0px;font-weight:normal;color:#333;line-height:16.09px;transform:scaleX(0.9214);transform-origin:0 0;">Store Instruction:</div>
<div class="t" style="left:1046.7px;top:356.13px;font-size:14.0px;font-weight:normal;color:#333;line-height:16.09px;transform:scaleX(0.9536);transform-origin:0 0;">Store Time (m):</div>
<div style="left:626px;top:374px;width:378px;height:23px;background:#fff;box-sizing:border-box;border:1px solid #1a1a1a;border-right-color:#484848;border-bottom-color:#505050;box-shadow:inset 0 -1px 0 #a0a0a0;"></div>
<div style="left:1004px;top:374px;width:14px;height:11px;background:#d4d0c8;box-shadow:inset 1px 1px 0 #fff, inset -1px -1px 0 #808080, inset -2px -2px 0 #b0b0b0"></div>
<div style="left:1008px;top:378px;width:0px;height:0px;border-left:3px solid transparent;border-right:3px solid transparent;border-bottom:3px solid #a0a0a0;"></div>
<div style="left:1004px;top:385px;width:14px;height:12px;background:#d4d0c8;box-shadow:inset 1px 1px 0 #fff, inset -1px -1px 0 #808080, inset -2px -2px 0 #b0b0b0"></div>
<div style="left:1008px;top:390px;width:0px;height:0px;border-left:3px solid transparent;border-right:3px solid transparent;border-top:3px solid #a0a0a0;"></div>
<div style="left:1027px;top:374px;width:132px;height:23px;background:#fff;box-sizing:border-box;border:1px solid #1a1a1a;border-right-color:#484848;border-bottom-color:#505050;box-shadow:inset 0 -1px 0 #a0a0a0;"></div>
<div class="t" style="left:793px;width:600px;text-align:center;top:375.53px;font-size:14.0px;font-weight:bold;color:#0000cc;line-height:16.09px;transform:scaleX(0.9643);transform-origin:50% 0;">12</div>
<div class="t" style="left:677px;top:400.33px;font-size:14.0px;font-weight:normal;color:#333;line-height:16.09px;transform:scaleX(0.9643);transform-origin:0 0;">ATA:</div>
<div class="t" style="left:853.6px;top:400.43px;font-size:14.0px;font-weight:normal;color:#333;line-height:16.09px;transform:scaleX(0.9357);transform-origin:0 0;">MOD Status:</div>
<div class="t" style="left:1075px;top:400.43px;font-size:14.0px;font-weight:normal;color:#333;line-height:16.09px;transform:scaleX(0.9643);transform-origin:0 0;">Price:</div>
<div style="left:626px;top:418px;width:132px;height:24px;background:#fff;box-sizing:border-box;border:1px solid #1a1a1a;border-right-color:#484848;border-bottom-color:#505050;box-shadow:inset 0 -1px 0 #a0a0a0;"></div>
<div style="left:767px;top:418px;width:250px;height:24px;background:#fff;box-sizing:border-box;border:1px solid #1a1a1a;border-right-color:#484848;border-bottom-color:#505050;box-shadow:inset 0 -1px 0 #a0a0a0;"></div>
<div style="left:1028px;top:418px;width:131px;height:25px;background:#fff;box-sizing:border-box;border:1px solid #1a1a1a;border-right-color:#484848;border-bottom-color:#505050;box-shadow:inset 0 -1px 0 #a0a0a0;"></div>
<div class="t" style="left:793.5px;width:600px;text-align:center;top:420.80px;font-size:16.8px;font-weight:bold;color:#0000cc;line-height:19.30px;">12345</div>
<div class="t" style="left:637.8px;top:445.43px;font-size:14.0px;font-weight:normal;color:#333;line-height:16.09px;transform:scaleX(0.9500);transform-origin:0 0;">Document Reference:</div>
<div class="t" style="left:1067.5px;top:445.43px;font-size:14.0px;font-weight:normal;color:#333;line-height:16.09px;transform:scaleX(0.9214);transform-origin:0 0;">MTBUR:</div>
<div style="left:626px;top:462px;width:378px;height:26px;background:#fff;box-sizing:border-box;border:1px solid #1a1a1a;border-right-color:#484848;border-bottom-color:#505050;box-shadow:inset 0 -1px 0 #a0a0a0;"></div>
<div style="left:1004px;top:462px;width:14px;height:13px;background:#d4d0c8;box-shadow:inset 1px 1px 0 #fff, inset -1px -1px 0 #808080, inset -2px -2px 0 #b0b0b0"></div>
<div style="left:1008px;top:467px;width:0px;height:0px;border-left:3px solid transparent;border-right:3px solid transparent;border-bottom:3px solid #a0a0a0;"></div>
<div style="left:1004px;top:475px;width:14px;height:13px;background:#d4d0c8;box-shadow:inset 1px 1px 0 #fff, inset -1px -1px 0 #808080, inset -2px -2px 0 #b0b0b0"></div>
<div style="left:1008px;top:480px;width:0px;height:0px;border-left:3px solid transparent;border-right:3px solid transparent;border-top:3px solid #a0a0a0;"></div>
<div class="t" style="left:627.6px;top:465.73px;font-size:10.35px;font-weight:bold;color:#0000cc;line-height:11.89px;">CMM 32-40-51</div>
<div style="left:1028px;top:462px;width:131px;height:26px;background:#fff;box-sizing:border-box;border:1px solid #1a1a1a;border-right-color:#484848;border-bottom-color:#505050;box-shadow:inset 0 -1px 0 #a0a0a0;"></div>
<div class="t" style="left:637.3px;top:490.13px;font-size:14.0px;font-weight:normal;color:#333;line-height:16.09px;transform:scaleX(0.9714);transform-origin:0 0;">Specifications / Standards:</div>
<div class="t" style="left:1054.7px;top:490.13px;font-size:14.0px;font-weight:normal;color:#333;line-height:16.09px;transform:scaleX(0.9571);transform-origin:0 0;">Group Code:</div>
<div style="left:626px;top:507px;width:378px;height:25px;background:#fff;box-sizing:border-box;border:1px solid #1a1a1a;border-right-color:#484848;border-bottom-color:#505050;box-shadow:inset 0 -1px 0 #a0a0a0;"></div>
<div style="left:1004px;top:507px;width:14px;height:12px;background:#d4d0c8;box-shadow:inset 1px 1px 0 #fff, inset -1px -1px 0 #808080, inset -2px -2px 0 #b0b0b0"></div>
<div style="left:1008px;top:512px;width:0px;height:0px;border-left:3px solid transparent;border-right:3px solid transparent;border-bottom:3px solid #a0a0a0;"></div>
<div style="left:1004px;top:519px;width:14px;height:13px;background:#d4d0c8;box-shadow:inset 1px 1px 0 #fff, inset -1px -1px 0 #808080, inset -2px -2px 0 #b0b0b0"></div>
<div style="left:1008px;top:524px;width:0px;height:0px;border-left:3px solid transparent;border-right:3px solid transparent;border-top:3px solid #a0a0a0;"></div>
<div class="t" style="left:628.3px;top:509.91px;font-size:10.6px;font-weight:bold;color:#0000cc;line-height:12.18px;">10-62237-10</div>
<div style="left:1028px;top:507px;width:130px;height:22px;background:#c0ffff;box-shadow:inset 1px 1px 0 #808080, inset 2px 2px 0 #404040, inset -1px -1px 0 #fff, inset -2px -2px 0 #d4d0c8"></div>
<div style="left:1143px;top:509px;width:14px;height:18px;background:#d4d0c8;box-shadow:inset 1px 1px 0 #fff, inset -1px -1px 0 #404040, inset -2px -2px 0 #808080"></div>
<div style="left:1146.5px;top:516.5px;width:0px;height:0px;border-left:3.5px solid transparent;border-right:3.5px solid transparent;border-top:4px solid #000;"></div>
<div style="left:626px;top:535px;width:11px;height:11px;background:#fff;box-shadow:inset 1px 1px 0 #808080, inset -1px -1px 0 #ffffff, inset 2px 2px 0 #404040, inset -2px -2px 0 #d4d0c8;"></div>
<div class="t" style="left:641.2px;top:536.02px;font-size:10.14px;font-weight:bold;color:#8b0000;line-height:11.65px;">ETOPS-180 Not Approved</div>
<div class="t" style="left:837px;top:534.13px;font-size:14.0px;font-weight:normal;color:#333;line-height:16.09px;transform:scaleX(0.9621);transform-origin:0 0;">Restrictions To Use:</div>
<div style="left:626px;top:551px;width:520px;height:28px;background:#fff;box-sizing:border-box;border:1px solid #1a1a1a;border-right-color:#484848;border-bottom-color:#505050;box-shadow:inset 0 -1px 0 #a0a0a0;"></div>
<div style="left:1146px;top:551px;width:14px;height:14px;background:#d4d0c8;box-shadow:inset 1px 1px 0 #fff, inset -1px -1px 0 #808080, inset -2px -2px 0 #b0b0b0"></div>
<div style="left:1150px;top:557px;width:0px;height:0px;border-left:3px solid transparent;border-right:3px solid transparent;border-bottom:3px solid #a0a0a0;"></div>
<div style="left:1146px;top:565px;width:14px;height:14px;background:#d4d0c8;box-shadow:inset 1px 1px 0 #fff, inset -1px -1px 0 #808080, inset -2px -2px 0 #b0b0b0"></div>
<div style="left:1150px;top:571px;width:0px;height:0px;border-left:3px solid transparent;border-right:3px solid transparent;border-top:3px solid #a0a0a0;"></div>
<div style="left:626px;top:589px;width:78px;height:32px;background:#c8c8f8;box-shadow:inset 1px 1px 0 #ffffff, inset -1px -1px 0 #404040, inset -2px -2px 0 #808080"></div>
<svg style="position:absolute;left:654px;top:590px" width="22" height="19" viewBox="0 0 22 19">
<path d="M1 1 L20 1 L20 10 Q18 12 14 12 Q12 16 8 17 L1 17Z" fill="#f8f080" stroke="#a09020" stroke-width="0.8"/>
<path d="M8 17 Q10 13 14 12" fill="#d8c850" stroke="#a09020" stroke-width="0.6"/>
<path d="M2 5 H19 M2 8 H19" stroke="#e0d060" stroke-width="0.8"/>
<path d="M6 0 V14 Q6 16 8 16 Q10 16 10 14 V3" stroke="#202020" stroke-width="1" fill="none"/>
</svg>
<div class="t" style="left:651.3px;top:606.04px;font-size:9.35px;font-weight:normal;color:#000;line-height:10.74px;">Attach</div>
<div class="t" style="left:720.8px;top:578.43px;font-size:14.0px;font-weight:normal;color:#333;line-height:16.09px;transform:scaleX(0.9571);transform-origin:0 0;">Remarks:</div>
<div style="left:708px;top:596px;width:438px;height:25px;background:#fff;box-sizing:border-box;border:1px solid #1a1a1a;border-right-color:#484848;border-bottom-color:#505050;box-shadow:inset 0 -1px 0 #a0a0a0;"></div>
<div style="left:1146px;top:596px;width:14px;height:12px;background:#d4d0c8;box-shadow:inset 1px 1px 0 #fff, inset -1px -1px 0 #808080, inset -2px -2px 0 #b0b0b0"></div>
<div style="left:1150px;top:601px;width:0px;height:0px;border-left:3px solid transparent;border-right:3px solid transparent;border-bottom:3px solid #a0a0a0;"></div>
<div style="left:1146px;top:608px;width:14px;height:13px;background:#d4d0c8;box-shadow:inset 1px 1px 0 #fff, inset -1px -1px 0 #808080, inset -2px -2px 0 #b0b0b0"></div>
<div style="left:1150px;top:613px;width:0px;height:0px;border-left:3px solid transparent;border-right:3px solid transparent;border-top:3px solid #a0a0a0;"></div>
<div style="left:1171px;top:84px;width:10px;height:546px;background:#d4d0c8"></div>
<svg style="position:absolute;left:0;top:0" width="1181" height="633">
<path d="M1045 388 L927 468 L949 492 Z" fill="#0b96fb"/>
<circle cx="933" cy="483.7" r="18" fill="#0b96fb" stroke="#fff" stroke-width="1.2"/>
<circle cx="933" cy="483.7" r="18.6" fill="none" stroke="#222" stroke-width="1"/>
<text x="933" y="490.5" text-anchor="middle" font-family="Liberation Sans" font-weight="bold" font-size="17" fill="#fff">6</text>
</svg>
</body></html>
